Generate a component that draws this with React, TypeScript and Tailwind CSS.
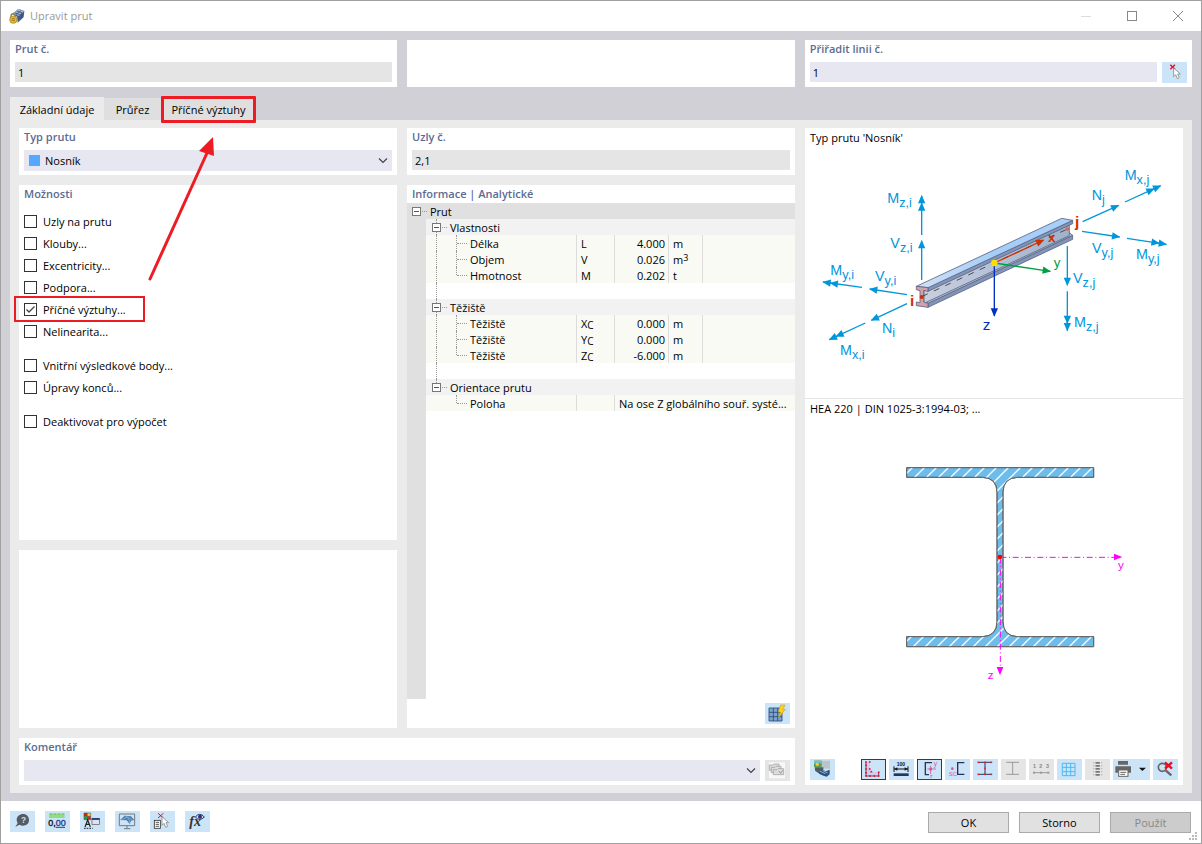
import React, { useState } from 'react';

const LABEL = 'text-[#5b6b93] font-semibold';

function Card({ className = '', children }: { className?: string; children?: React.ReactNode }) {
  return <section className={`bg-white flex flex-col ${className}`}>{children}</section>;
}

function CardTitle({ htmlFor, children }: { htmlFor?: string; children: React.ReactNode }) {
  if (htmlFor) {
    return (
      <label htmlFor={htmlFor} className={`block h-[22px] px-[5px] leading-[18px] ${LABEL}`}>
        {children}
      </label>
    );
  }
  return <h2 className={`h-[22px] px-[5px] leading-[18px] ${LABEL}`}>{children}</h2>;
}

function Chevron() {
  return (
    <svg viewBox="0 0 10 6" className="absolute right-1 top-2 w-[10px] h-[6px] pointer-events-none" fill="none">
      <path d="M1 .5L5 4.5L9 .5" stroke="#444" strokeWidth="1.2" />
    </svg>
  );
}

function IconButton({
  label,
  variant = 'blue',
  wide = false,
  children
}: {
  label: string;
  variant?: 'blue' | 'active' | 'grey';
  wide?: boolean;
  children: React.ReactNode;
}) {
  const colors = {
    blue: 'bg-[#cce4f7]',
    active: 'bg-[#cce4f7] outline outline-1 -outline-offset-1 outline-[#00498f]',
    grey: 'bg-[#e5e5e5]'
  };
  return (
    <button
      type="button"
      aria-label={label}
      disabled={variant === 'grey'}
      className={`shrink-0 h-[21px] ${wide ? 'w-[37px]' : 'w-[25px]'} ${colors[variant]}`}
    >
      <svg viewBox={wide ? '0 0 111 63' : '0 0 75 63'} className="w-full h-full" fill="none">
        {children}
      </svg>
    </button>
  );
}

function Squares({ points, color, size = 5 }: { points: number[][]; color: string; size?: number }) {
  return (
    <>
      {points.map(([x, y]) => (
        <rect key={`${x}-${y}`} x={x - size / 2} y={y - size / 2} width={size} height={size} fill={color} />
      ))}
    </>
  );
}

function Cursor({ x, y }: { x: number; y: number }) {
  return (
    <path
      d="M0 0V26L6 20L11 32L17 29L12 18H20Z"
      transform={`translate(${x} ${y})`}
      fill="#fff"
      stroke="#888"
      strokeWidth="2.5"
    />
  );
}

function TitleBar() {
  return (
    <header className="h-[30px] bg-white flex items-center justify-between pl-2 pr-[18px]">
      <div className="flex items-center gap-[5px]">
        <svg viewBox="0 0 48 48" className="w-4 h-4" fill="none">
          <path d="M10 18L28 3L46 9L44 28L26 44L24 26Z" fill="#4c6388" />
          <path d="M11 16L28 3L46 9L30 24Z" fill="#9db3d3" />
          <path d="M17 14L35 21M23 9L40 15M21 20L37 7M44 14L28 28M43 21L27 36M38 14L36 32" stroke="#34496d" strokeWidth="2" />
          <path d="M6 31V24C6 15 18 15 18 24V31" stroke="#8e8457" strokeWidth="4" />
          <circle cx="13" cy="35" r="11" fill="#e8b92c" stroke="#9b7a24" strokeWidth="2" />
          <path d="M8 32H18M8 37H18" stroke="#806020" strokeWidth="2" />
        </svg>
        <h1 className="text-[#999]">Upravit prut</h1>
      </div>
      <div className="flex items-center gap-9">
        <button type="button" aria-label="Minimalizovat" className="w-[10px] h-[10px]">
          <svg viewBox="0 0 10 10"><path d="M0 5.5H10" stroke="#ddd" /></svg>
        </button>
        <button type="button" aria-label="Maximalizovat" className="w-[10px] h-[10px]">
          <svg viewBox="0 0 10 10"><rect x=".5" y=".5" width="9" height="9" fill="none" stroke="#888" /></svg>
        </button>
        <button type="button" aria-label="Zavřít" className="w-[10px] h-[10px]">
          <svg viewBox="0 0 10 10"><path d="M0 0L10 10M10 0L0 10" stroke="#888" /></svg>
        </button>
      </div>
    </header>
  );
}

function TopRow() {
  return (
    <div className="grid grid-cols-3 gap-[10px]">
      <Card className="h-[47px]">
        <CardTitle htmlFor="member-no">Prut č.</CardTitle>
        <input id="member-no" readOnly defaultValue="1" className="mx-[5px] h-5 px-[3px] pt-px bg-[#e5e5e5] outline-none" />
      </Card>
      <Card className="h-[47px]" />
      <Card className="h-[47px]">
        <CardTitle htmlFor="line-no">Přiřadit linii č.</CardTitle>
        <div className="flex gap-[5px] px-[5px]">
          <input id="line-no" defaultValue="1" className="flex-1 min-w-0 h-5 px-[3px] pt-px bg-[#e7e7f2] outline-none" />
          <IconButton label="Vybrat linii">
            <path d="M25 8L39 22M39 8L25 22" stroke="#e01020" strokeWidth="4" />
            <Cursor x={35} y={18} />
          </IconButton>
        </div>
      </Card>
    </div>
  );
}

function Tabs() {
  return (
    <nav className="flex items-end h-[23px] mt-[10px] relative" role="tablist">
      <button type="button" role="tab" aria-selected="true" className="h-[23px] pt-[3px] w-[94px] bg-[#ebebeb]">
        Základní údaje
      </button>
      <button type="button" role="tab" aria-selected="false" className="h-[22px] pt-[1px] w-[57px] bg-[#dfdfdf]">
        Průřez
      </button>
      <button type="button" role="tab" aria-selected="false" className="h-[22px] pt-[1px] w-[95px] bg-[#dfdfdf] relative">
        Příčné výztuhy
        <span className="absolute inset-x-0 -top-0.5 -bottom-[3px] border-3 border-[#ed1c24] rounded-[1px]" />
      </button>
    </nav>
  );
}

const OPTION_GROUPS = [
  ['Uzly na prutu', 'Klouby...', 'Excentricity...', 'Podpora...', 'Příčné výztuhy...', 'Nelinearita...'],
  ['Vnitřní výsledkové body...', 'Úpravy konců...'],
  ['Deaktivovat pro výpočet']
];

function Options() {
  const [checked, setChecked] = useState<string[]>(['Příčné výztuhy...']);

  const toggle = (name: string) =>
    setChecked((prev) => (prev.includes(name) ? prev.filter((n) => n !== name) : [...prev, name]));

  return (
    <Card className="flex-[355_1_0]">
      <CardTitle>Možnosti</CardTitle>
      <div className="flex flex-col gap-3 px-[5px] pt-1">
        {OPTION_GROUPS.map((group) => (
          <div key={group[0]}>
            {group.map((name) => (
              <div key={name} className="relative w-fit">
                <label className="flex items-center gap-[6px] h-[22px]">
                  <span className="relative w-[13px] h-[14px]">
                    <input
                      type="checkbox"
                      checked={checked.includes(name)}
                      onChange={() => toggle(name)}
                      className="appearance-none block w-[13px] h-[13px] border border-[#333] bg-white"
                    />
                    {checked.includes(name) && (
                      <svg viewBox="0 0 13 13" className="absolute left-0 top-0 w-[13px] h-[13px] pointer-events-none" fill="none">
                        <path d="M2.5 6.5L5 9L10.5 3.5" stroke="#444" strokeWidth="1.3" />
                      </svg>
                    )}
                  </span>
                  {name}
                </label>
                {name === 'Příčné výztuhy...' && (
                  <span className="absolute -left-[10px] -right-[19px] -top-[3px] h-[26px] border-2 border-[#ed1c24] pointer-events-none" />
                )}
              </div>
            ))}
          </div>
        ))}
      </div>
    </Card>
  );
}

type Row = { name: string; symbol: string; sub?: string; value: string; unit?: string; sup?: string };

const INFO: { group: string; rows: Row[] }[] = [
  {
    group: 'Vlastnosti',
    rows: [
      { name: 'Délka', symbol: 'L', value: '4.000', unit: 'm' },
      { name: 'Objem', symbol: 'V', value: '0.026', unit: 'm', sup: '3' },
      { name: 'Hmotnost', symbol: 'M', value: '0.202', unit: 't' }
    ]
  },
  {
    group: 'Těžiště',
    rows: [
      { name: 'Těžiště', symbol: 'X', sub: 'C', value: '0.000', unit: 'm' },
      { name: 'Těžiště', symbol: 'Y', sub: 'C', value: '0.000', unit: 'm' },
      { name: 'Těžiště', symbol: 'Z', sub: 'C', value: '-6.000', unit: 'm' }
    ]
  },
  {
    group: 'Orientace prutu',
    rows: [{ name: 'Poloha', symbol: '', value: 'Na ose Z globálního souř. systé...' }]
  }
];

function Toggle() {
  return (
    <button type="button" aria-label="Sbalit" className="relative shrink-0 w-[9px] h-[9px] border border-[#777] bg-white">
      <span className="absolute left-px right-px top-[3px] h-px bg-[#555]" />
    </button>
  );
}

function InfoTable() {
  const cell = 'p-0 pt-px border-r border-[#dcdcdc]';
  return (
    <div className="flex-1 flex flex-col">
      <div className="flex items-center h-4 pl-[5px] bg-[#e0e0e0]">
        <Toggle />
        <span className="w-[5px] ml-px mr-[3px] border-t border-dotted border-[#999]" />
        <span className="pt-0.5 leading-[14px]">Prut</span>
      </div>
      <div className="flex-1 border-l-[19px] border-[#e0e0e0]">
        <table className="w-full table-fixed border-separate border-spacing-0 leading-[15px]">
          <colgroup>
            <col className="w-[151px]" />
            <col className="w-[38px]" />
            <col className="w-[54px]" />
            <col className="w-[34px]" />
            <col />
          </colgroup>
          {INFO.map(({ group, rows }, g) => {
            const last = g === INFO.length - 1;
            return (
              <tbody key={group}>
                <tr className="h-4 bg-[#f2f2f2]">
                  <th colSpan={5} className="relative p-0 pl-[6px] font-normal text-left">
                    <span className={`absolute left-[10px] top-0 border-l border-dotted border-[#999] ${last ? 'h-1' : 'h-4'}`} />
                    <span className="relative flex items-center h-4">
                      <Toggle />
                      <span className="w-[5px] ml-px mr-[3px] border-t border-dotted border-[#999]" />
                      <span className="pt-0.5 leading-[14px]">{group}</span>
                    </span>
                  </th>
                </tr>
                {rows.map((row, i) => (
                  <tr key={i} className="h-4 bg-[#f9faf4]">
                    <td className={`relative ${cell} pl-11`}>
                      {!last && <span className="absolute left-[10px] inset-y-0 border-l border-dotted border-[#999]" />}
                      <span
                        className={`absolute left-[30px] top-0 border-l border-dotted border-[#999] ${i === rows.length - 1 ? 'h-2' : 'h-4'}`}
                      />
                      <span className="absolute left-[31px] top-2 w-[10px] border-t border-dotted border-[#999]" />
                      {row.name}
                    </td>
                    <td className={`${cell} pl-1`}>
                      {row.symbol}
                      {row.sub && <span className="relative top-px text-[10px] leading-none">{row.sub}</span>}
                    </td>
                    {row.unit ? (
                      <>
                        <td className={`${cell} pr-[3px] text-right`}>{row.value}</td>
                        <td className={`${cell} pl-1`}>
                          {row.unit}
                          {row.sup && <span className="relative -top-[3px] text-[9px] leading-none">{row.sup}</span>}
                        </td>
                        <td className="p-0" />
                      </>
                    ) : (
                      <td colSpan={3} className="p-0 pt-px pl-1 whitespace-nowrap">{row.value}</td>
                    )}
                  </tr>
                ))}
                {!last && (
                  <tr className="h-4">
                    <td colSpan={5} className="relative p-0">
                      <span className="absolute left-[10px] inset-y-0 border-l border-dotted border-[#999]" />
                    </td>
                  </tr>
                )}
              </tbody>
            );
          })}
        </table>
      </div>
    </div>
  );
}

const BLUE = '#0096dc';

// Force arrow: heads is 1 for a force, 2 for a moment
function Arrow({ from, to, heads = 1, color = BLUE }: { from: number[]; to: number[]; heads?: number; color?: string }) {
  const [x1, y1] = from;
  const [x2, y2] = to;
  const angle = (Math.atan2(y2 - y1, x2 - x1) * 180) / Math.PI;
  return (
    <g>
      <line x1={x1} y1={y1} x2={x2} y2={y2} stroke={color} strokeWidth="4" />
      <g transform={`translate(${x2} ${y2}) rotate(${angle})`} fill={color}>
        <path d="M2 0L-23 -11V11Z" />
        {heads === 2 && <path d="M-20 0L-45 -11V11Z" />}
      </g>
    </g>
  );
}

function ForceLabel({ x, y, name, sub }: { x: number; y: number; name: string; sub: string }) {
  return (
    <text x={x} y={y} fontSize="43" fill={BLUE}>
      {name}
      <tspan dy="12" fontSize="38">{sub}</tspan>
    </text>
  );
}

function BeamDrawing() {
  return (
    <svg
      viewBox="0 0 1134 690"
      className="w-full h-[230px] font-['Liberation_Sans',Arial,sans-serif]"
      role="img"
      aria-label="Nosník"
    >
      <defs>
        <linearGradient id="flange" x1="0" x2="1">
          <stop offset="0" stopColor="#cfe0f5" />
          <stop offset=".5" stopColor="#a5cdf8" />
          <stop offset="1" stopColor="#a9d0f8" />
        </linearGradient>
        <linearGradient id="web" x1="0" x2="1">
          <stop offset="0" stopColor="#c8cfe0" />
          <stop offset="1" stopColor="#9fb2cc" />
        </linearGradient>
      </defs>
      <g stroke="#5c6480" strokeWidth="2.5" strokeLinejoin="round">
        <path d="M369 459L803 256V268L369 472Z" fill="#8194b9" />
        <path d="M357 452L793 248L803 256L369 460Z" fill="#b5c3dc" />
        <path d="M357 420L793 224V257L357 460Z" fill="url(#web)" />
        <path d="M369 412L803 211V221L369 424Z" fill="#8194b9" />
        <path d="M334 409L770 205L803 211L369 413Z" fill="url(#flange)" />
        <path d="M334 409L369 413V424L356 421V456L369 460V472L334 467V456L345 458V422L334 419Z" fill="#d1a1ac" />
      </g>
      <path d="M352 439L787 237" stroke="#333" strokeWidth="2.5" strokeDasharray="18 20" />
      <circle cx="350" cy="441" r="6" fill="#d03000" />
      <circle cx="787" cy="237" r="5" fill="#e06040" />

      <Arrow from={[350, 255]} to={[350, 137]} heads={2} />
      <Arrow from={[350, 390]} to={[350, 272]} />
      <Arrow from={[171, 412]} to={[54, 396]} heads={2} />
      <Arrow from={[306, 434]} to={[194, 417]} />
      <Arrow from={[306, 461]} to={[199, 511]} />
      <Arrow from={[181, 519]} to={[73, 569]} heads={2} />
      <Arrow from={[833, 215]} to={[941, 166]} />
      <Arrow from={[960, 156]} to={[1067, 107]} heads={2} />
      <Arrow from={[831, 244]} to={[944, 261]} />
      <Arrow from={[966, 265]} to={[1084, 283]} heads={2} />
      <Arrow from={[787, 288]} to={[787, 406]} />
      <Arrow from={[787, 424]} to={[787, 542]} heads={2} />

      <Arrow from={[568, 339]} to={[716, 270]} color="#d03000" />
      <Arrow from={[568, 339]} to={[736, 364]} color="#00a040" />
      <Arrow from={[568, 339]} to={[568, 498]} color="#0030c0" />
      <circle cx="568" cy="339" r="10" fill="#ffe000" />

      <ForceLabel x={247} y={159} name="M" sub="z,i" />
      <ForceLabel x={256} y={293} name="V" sub="z,i" />
      <ForceLabel x={76} y={375} name="M" sub="y,i" />
      <ForceLabel x={210} y={394} name="V" sub="y,i" />
      <ForceLabel x={231} y={550} name="N" sub="i" />
      <ForceLabel x={105} y={615} name="M" sub="x,i" />
      <ForceLabel x={860} y={149} name="N" sub="j" />
      <ForceLabel x={959} y={89} name="M" sub="x,j" />
      <ForceLabel x={861} y={308} name="V" sub="y,j" />
      <ForceLabel x={993} y={326} name="M" sub="y,j" />
      <ForceLabel x={804} y={398} name="V" sub="z,j" />
      <ForceLabel x={807} y={531} name="M" sub="z,j" />
      <text x="315" y="468" fontSize="46" fontWeight="bold" fill="#d03000">i</text>
      <text x="810" y="230" fontSize="46" fontWeight="bold" fill="#d03000">j</text>
      <text x="729" y="276" fontSize="40" fontWeight="bold" fill="#d03000">x</text>
      <text x="746" y="351" fontSize="40" fill="#00a040">y</text>
      <text x="533" y="540" fontSize="46" fill="#0030c0">z</text>
    </svg>
  );
}

function SectionDrawing() {
  return (
    <svg
      viewBox="-225 0 1134 780"
      className="w-full h-[260px] font-['Liberation_Sans',Arial,sans-serif]"
      role="img"
      aria-label="HEA 220"
    >
      <defs>
        <pattern id="hatch" width="36" height="36" patternUnits="userSpaceOnUse">
          <path d="M0 36L36 0M-9 9L9 -9M27 45L45 27" stroke="#fff" strokeWidth="4" />
        </pattern>
      </defs>
      {['#6cbcec', 'url(#hatch)'].map((fill) => (
        <path
          key={fill}
          d="M80 83H641V112H412Q369 114 369 157V545Q369 588 412 590H641V620H80V590H308Q351 588 351 545V157Q351 114 308 112H80Z"
          fill={fill}
          stroke="#666"
          strokeWidth="3"
        />
      ))}
      <g stroke="#f0f" strokeWidth="3" strokeDasharray="18 8 3 8">
        <path d="M361 352H703" />
        <path d="M361 352V682" />
      </g>
      <path d="M702 341L727 351L702 361ZM350 681L360 706L370 681Z" fill="#f0f" />
      <circle cx="360" cy="351" r="7" fill="red" />
      <text x="714" y="388" fontSize="35" fill="#f0f">y</text>
      <text x="323" y="717" fontSize="35" fill="#f0f">z</text>
    </svg>
  );
}

function SectionToolbar() {
  return (
    <div className="flex justify-between px-[5px] pb-[5px]">
      <IconButton label="Zobrazit obrázek">
        <rect x="12" y="5" width="48" height="24" fill="#b9c5ca" />
        <rect x="12" y="5" width="23" height="19" fill="#5c9c58" />
        <path d="M12 7L20 5H35V14L26 11L12 14Z" fill="#6fc0d8" />
        <circle cx="22" cy="16" r="5" fill="#f4d030" />
        <path d="M15 25H40V43H26L15 35Z" fill="#505c60" />
        <path d="M27 35L36 31L47 37L59 32V46L50 53L40 50L27 44Z" fill="#2c527f" />
        <path d="M29 36L46 44M38 34L53 42" stroke="#8cb6dc" strokeWidth="3" />
      </IconButton>
      <div className="flex gap-[3px]">
        <IconButton label="Obrys" variant="active">
          <path d="M15 9H27V31Q27 39 36 39H53V51H15Z" fill="#d2c9f4" />
          <path d="M15 9V51H53V39" stroke="#5c2444" strokeWidth="2.5" />
          <Squares
            color="#e41825"
            points={[[15, 9], [26, 9], [15, 19], [15, 30], [26, 30], [15, 41], [31, 38], [15, 51], [27, 51], [40, 51], [53, 51], [53, 40]]}
          />
        </IconButton>
        <IconButton label="Kóty">
          <path d="M14 43H59V51H14Z" fill="#24345c" />
          <path d="M15 22V39M57 22V39M15 30H57" stroke="#111" strokeWidth="3" />
          <path d="M16 30L25 25V35ZM56 30L47 25V35Z" fill="#111" />
          <text x="23" y="21" fontSize="15" fontWeight="bold" fill="#111" fontFamily="Liberation Sans">100</text>
        </IconButton>
        <IconButton label="Hlavní osy" variant="active">
          <path d="M45 11H25V47H36" stroke="#24345c" strokeWidth="4" />
          <path d="M31 30H57M41 20V46" stroke="#d9569c" strokeWidth="2.5" />
          <rect x="37" y="26" width="8" height="8" fill="#d9569c" />
          <text x="50" y="22" fontSize="20" fill="#d9569c" fontFamily="Liberation Sans">y</text>
          <text x="38" y="56" fontSize="17" fill="#d9569c" fontFamily="Liberation Sans">z</text>
        </IconButton>
        <IconButton label="Střed smyku">
          <path d="M58 11H38V46H58" stroke="#24345c" strokeWidth="4" />
          <circle cx="22" cy="29" r="4" fill="#d9569c" />
          <text x="11" y="52" fontSize="18" fill="#d9569c" fontFamily="Liberation Sans">SC</text>
        </IconButton>
        <IconButton label="Body napětí">
          <path d="M16 10H55M16 46H55M36 10V46" stroke="#24345c" strokeWidth="3" />
          <Squares color="#f02030" points={[[16, 10], [36, 10], [55, 10], [36, 28], [16, 46], [36, 46], [55, 46]]} />
        </IconButton>
        <IconButton label="Profil" variant="grey">
          <path d="M16 10H54M16 46H54M35 10V46" stroke="#999" strokeWidth="3" />
        </IconButton>
        <IconButton label="Číslování" variant="grey">
          <text x="12" y="28" fontSize="16" fontWeight="bold" fill="#888" fontFamily="Liberation Sans">1</text>
          <text x="31" y="28" fontSize="16" fontWeight="bold" fill="#888" fontFamily="Liberation Sans">2</text>
          <text x="51" y="28" fontSize="16" fontWeight="bold" fill="#888" fontFamily="Liberation Sans">3</text>
          <path d="M15 41H59" stroke="#999" strokeWidth="3" />
          <Squares color="#999" points={[[15, 41], [36, 41], [58, 41]]} size={6} />
        </IconButton>
        <IconButton label="Mřížka">
          <path d="M16 13H54V50H16ZM28 13V50M41 13V50M16 25H54M16 38H54" stroke="#4db8f4" strokeWidth="3" />
        </IconButton>
        <IconButton label="Hodnoty" variant="grey">
          <path d="M26 10V53M50 10V53" stroke="#aaa" strokeWidth="4" strokeDasharray="3 6" />
          <path d="M38 9V53" stroke="#777" strokeWidth="13" strokeDasharray="5 4" />
        </IconButton>
        <IconButton label="Tisk" wide>
          <path d="M15 6H45V17H15ZM7 22H54V41H45V34H17V41H7Z" fill="#666" />
          <rect x="17" y="33" width="28" height="19" fill="#fff" stroke="#666" strokeWidth="3" />
          <path d="M22 40H40M22 46H36" stroke="#666" strokeWidth="3" />
          <path d="M78 26H99L88 36Z" fill="#111" />
        </IconButton>
        <IconButton label="Zrušit přiblížení">
          <circle cx="28" cy="25" r="12" stroke="#666" strokeWidth="5" />
          <path d="M38 34L55 49" stroke="#666" strokeWidth="7" />
          <path d="M36 10L57 29M57 10L36 29" stroke="#e51020" strokeWidth="7" />
        </IconButton>
      </div>
    </div>
  );
}

function Footer() {
  const button = 'w-[81px] h-[21px] border border-[#aaa]';
  return (
    <footer className="relative flex items-start justify-between h-[42px] pt-[10px] pl-[9px] pr-[10px] bg-white">
      <div className="flex gap-[10px]">
        <IconButton label="Nápověda">
          <path d="M39 9C50 9 57 17 57 27C57 38 49 44 39 44C35 44 31 43 28 41L16 48L23 36C20 32 20 28 20 25C21 16 29 9 39 9Z" fill="#555b60" />
          <text x="33" y="36" fontSize="25" fontWeight="bold" fill="#cce4f7" fontFamily="Liberation Sans">?</text>
        </IconButton>
        <IconButton label="Jednotky">
          <rect x="12" y="7" width="47" height="14" fill="#92dc82" />
          <path d="M18 7V12M30 7V12M42 7V12M54 7V12" stroke="#58a850" strokeWidth="2" />
          <text x="10" y="44" fontSize="27" fill="#111" stroke="#111" fontFamily="Liberation Sans">
            0,<tspan fill="#263c8c" stroke="#263c8c">00</tspan>
          </text>
          <path d="M32 49H60" stroke="#263c8c" strokeWidth="3" />
        </IconButton>
        <IconButton label="Zobrazení">
          <rect x="12" y="6" width="10" height="10" fill="#e02020" />
          <rect x="22" y="6" width="10" height="10" fill="#f0d820" />
          <rect x="12" y="16" width="10" height="10" fill="#20a830" />
          <rect x="22" y="16" width="10" height="10" fill="#e02020" />
          <path d="M12 6H32V26H12ZM22 6V26M12 16H32" stroke="#444" strokeWidth="1.5" />
          <path d="M15 48L23 27L31 48M18 40H28" stroke="#222" strokeWidth="3.5" />
          <path d="M12 52H38" stroke="#222" strokeWidth="3" strokeDasharray="5 3" />
          <rect x="36" y="23" width="22" height="17" fill="#dce4ea" stroke="#555" strokeWidth="2" />
          <path d="M35 24H59" stroke="#1c2c74" strokeWidth="5" />
        </IconButton>
        <IconButton label="Pohled">
          <path d="M13 9H59V44H13ZM36 44V52M27 53H46" stroke="#777" strokeWidth="3" />
          <path d="M15 27L29 14L48 16L58 27L48 29L44 39L35 28Z" fill="#4d7fae" />
          <path d="M17 27L38 18L46 37M29 14L52 27" stroke="#92b8da" strokeWidth="2" />
        </IconButton>
        <IconButton label="Vybrat">
          <rect x="13" y="28" width="18" height="24" fill="#fff" stroke="#333" strokeWidth="2.5" />
          <path d="M17 34H27M17 40H27M17 46H27" stroke="#333" strokeWidth="2.5" />
          <path d="M24 7L40 21M40 7L24 21" stroke="#e01020" strokeWidth="3" />
          <Cursor x={36} y={17} />
        </IconButton>
        <IconButton label="Funkce">
          <text x="13" y="45" fontSize="42" fontStyle="italic" fontWeight="bold" fill="#333" fontFamily="Liberation Serif">fx</text>
          <path d="M31 18Q44 2 58 18Q44 32 31 18Z" fill="#cce4f7" stroke="#30306c" strokeWidth="3" />
          <circle cx="45" cy="17" r="6" fill="#30306c" />
        </IconButton>
      </div>
      <div className="flex gap-[10px] pt-px">
        <button type="button" className={`${button} bg-[#e1e1e1]`}>OK</button>
        <button type="button" className={`${button} bg-[#e1e1e1]`}>Storno</button>
        <button type="button" disabled className={`${button} bg-[#ccc] text-[#888]`}>Použít</button>
      </div>
      <svg viewBox="0 0 9 9" className="absolute right-[3px] bottom-[2px] w-[9px] h-[9px]">
        <Squares color="#bbb" size={2} points={[[7, 1], [4, 4], [7, 4], [1, 7], [4, 7], [7, 7]]} />
      </svg>
    </footer>
  );
}

export default function App() {
  return (
    <div className="relative min-h-screen flex flex-col bg-white border border-[#a0a0a0] text-[11px] leading-4 text-black font-['Open_Sans','Noto_Sans',sans-serif]">
      <TitleBar />
      <main className="flex-1 flex flex-col bg-[#d1d0d6] px-[9px] pt-[9px] pb-2">
        <TopRow />
        <Tabs />
        <div className="flex-1 grid grid-cols-[378fr_388fr_378fr] gap-x-[10px] bg-[#ebebeb] px-[9px] py-2">
          <div className="col-span-2 flex flex-col gap-[10px]">
            <div className="flex-1 grid grid-cols-[378fr_388fr] gap-x-[10px]">
              <div className="flex flex-col gap-[10px]">
                <Card className="h-[47px]">
                  <CardTitle htmlFor="member-type">Typ prutu</CardTitle>
                  <div className="relative mx-[5px]">
                    <span className="absolute left-[5px] top-[5px] w-[11px] h-[11px] bg-[#55a8ff]" />
                    <select id="member-type" className="appearance-none block w-full h-[21px] pl-[21px] bg-[#e7e7f2] outline-none">
                      <option>Nosník</option>
                    </select>
                    <Chevron />
                  </div>
                </Card>
                <Options />
                <Card className="flex-[178_1_0]" />
              </div>
              <div className="flex flex-col gap-[10px]">
                <Card className="h-[47px]">
                  <CardTitle htmlFor="nodes">Uzly č.</CardTitle>
                  <input id="nodes" readOnly defaultValue="2,1" className="mx-[5px] h-5 px-[3px] pt-px bg-[#e5e5e5] outline-none" />
                </Card>
                <Card className="flex-1">
                  <h2 className={`h-[18px] px-[5px] leading-[18px] ${LABEL}`}>Informace | Analytické</h2>
                  <InfoTable />
                  <div className="flex justify-end px-[5px] pt-1 pb-[4px]">
                    <IconButton label="Přepočítat">
                      <path d="M12 15H51V54H12Z" fill="#7fa3cc" />
                      <path d="M12 15H51V54H12ZM25 15V54M38 15V54M12 28H51M12 41H51" stroke="#254b76" strokeWidth="2.5" />
                      <path d="M47 6H60L53 19H61L40 44L47 27H40Z" fill="#ffd21c" stroke="#d6a30b" strokeWidth="2" />
                    </IconButton>
                  </div>
                </Card>
              </div>
            </div>
            <Card className="h-[47px]">
              <CardTitle htmlFor="comment">Komentář</CardTitle>
              <div className="flex gap-[5px] px-[5px]">
                <div className="relative flex-1">
                  <select id="comment" className="appearance-none block w-full h-[21px] px-1 bg-[#e7e7f2] outline-none">
                    <option></option>
                  </select>
                  <Chevron />
                </div>
                <IconButton label="Komentáře" variant="grey">
                  <rect x="12" y="7" width="48" height="48" fill="#f8f8f8" />
                  <g fill="#ddd" stroke="#999" strokeWidth="2">
                    <path d="M13 15H24L27 12H42V31H13Z" />
                    <path d="M19 22H30L33 19H48V38H19Z" />
                    <path d="M25 29H36L39 26H56V44H25Z" />
                  </g>
                  <path d="M41 33L47 40L53 31" stroke="#999" strokeWidth="3" />
                </IconButton>
              </div>
            </Card>
          </div>

          <Card>
            <div className="h-[271px] flex flex-col border-b border-[#e5e5e5]">
              <h2 className="h-[22px] px-[5px] pt-[2px]">Typ prutu 'Nosník'</h2>
              <BeamDrawing />
            </div>
            <h2 className="px-[5px] pt-[2px]">HEA 220 | DIN 1025-3:1994-03; ...</h2>
            <div className="flex-1 pt-[23px]">
              <SectionDrawing />
            </div>
            <SectionToolbar />
          </Card>
        </div>
      </main>
      <Footer />

      {/* Callout from the option to its tab */}
      <svg viewBox="0 0 70 145" className="absolute left-[147px] top-[136px] w-[70px] h-[145px] pointer-events-none">
        <path d="M2 142L59 16" stroke="#ed1c24" strokeWidth="3" strokeLinecap="round" />
        <path d="M65 0L51 14L66 19Z" fill="#ed1c24" />
      </svg>
    </div>
  );
}
